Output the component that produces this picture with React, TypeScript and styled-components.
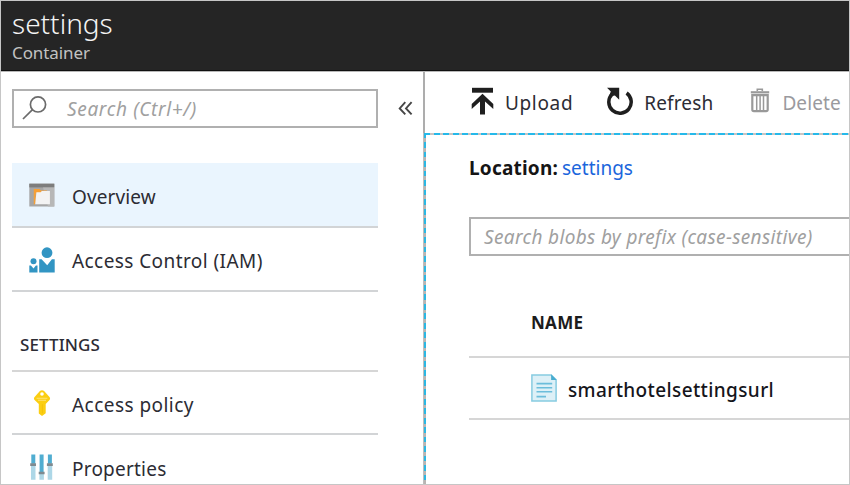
import React from "react";
import styled, { createGlobalStyle } from "styled-components";

const GlobalStyle = createGlobalStyle`
  *, *::before, *::after { box-sizing: border-box; }
  body { margin: 0; background: #fff; }
`;

const Frame = styled.div`
  width: 850px;
  height: 485px;
  border: 1px solid #c6c6c6;
  background: #fff;
  overflow: hidden;
  display: flex;
  flex-direction: column;
  font-family: "Noto Sans", "Open Sans", sans-serif;
  color: #262626;
  white-space: nowrap;
`;

const Header = styled.header`
  flex: none;
  height: 70px;
  background: #252525;
  border-bottom: 1px solid #101010;
  padding: 4px 0 0 11px;
  display: flex;
  flex-direction: column;
`;

const Text = styled.span<{
  $size: number;
  $spacing?: number;
  $color?: string;
  $weight?: number;
  $italic?: boolean;
}>`
  font-size: ${(p) => p.$size}px;
  letter-spacing: ${(p) => p.$spacing ?? 0}px;
  color: ${(p) => p.$color ?? "#2c2c34"};
  font-weight: ${(p) => p.$weight ?? 400};
  font-style: ${(p) => (p.$italic ? "italic" : "normal")};
`;

const Title = styled(Text).attrs({ as: "h1" })`
  margin: 0;
  line-height: 36px;
`;

const Subtitle = styled(Text)`
  line-height: 24px;
`;

const Body = styled.div`
  flex: 1;
  min-height: 0;
  display: flex;
  border-top: 1px solid #b8b8b8;
`;

const Sidebar = styled.aside`
  flex: none;
  width: 422px;
  padding: 17px 0 0 11px;
`;

const SearchLine = styled.div`
  display: flex;
  align-items: center;
  gap: 20px;
  margin-bottom: 35px;
`;

const Field = styled.div<{ $pad: number }>`
  height: 39px;
  border: 2px solid #b0b0b0;
  display: flex;
  align-items: center;
  padding-left: ${(p) => p.$pad}px;
`;

const MenuField = styled(Field)`
  width: 366px;
  gap: 19px;
  svg { margin-top: -2px; }
`;

const Menu = styled.nav`
  width: 366px;
`;

const MenuItem = styled.div<{ $height: number; $active?: boolean }>`
  height: ${(p) => p.$height}px;
  border-bottom: 2px solid #d2d4d6;
  background: ${(p) => (p.$active ? "#eaf5fe" : "transparent")};
  display: grid;
  grid-template-columns: 60px 1fr;
  align-items: center;
  padding-top: 4px;
`;

const IconCell = styled.span`
  display: flex;
  justify-content: center;
  padding-bottom: 3px;
  svg { display: block; }
`;

const SectionTitle = styled.div`
  height: 80px;
  border-bottom: 2px solid #d6d6d6;
  padding: 38px 0 0 8px;
  line-height: 30px;
`;

const Main = styled.main`
  flex: 1;
  min-width: 0;
  display: flex;
  flex-direction: column;
`;

const Toolbar = styled.div`
  flex: none;
  height: 61px;
  border-left: 2px solid #adadad;
  display: flex;
  align-items: center;
  padding-left: 46px;
`;

const ToolButton = styled.div<{ $gap: number; $after: number }>`
  display: flex;
  align-items: center;
  gap: ${(p) => p.$gap}px;
  margin-right: ${(p) => p.$after}px;
  svg { display: block; flex: none; margin-bottom: 4px; }
`;

const Blade = styled.section`
  flex: 1;
  min-height: 0;
  padding: 2px 0 0 46px;
  background:
    repeating-linear-gradient(90deg, #25b9ea 0 6px, #c9c4c2 6px 9.5px) 1px 0 / 100% 2px no-repeat,
    repeating-linear-gradient(180deg, #2bb7e3 0 5.5px, #b9b4b2 5.5px 9.5px) 1px 0 / 2px 100% no-repeat,
    linear-gradient(#bdbdbd, #bdbdbd) 0 0 / 1px 100% no-repeat;
`;

const Location = styled.div`
  height: 82px;
  padding-top: 19px;
  display: flex;
  gap: 4px;
  line-height: 28px;
`;

const BlobField = styled(Field)`
  border-right: 0;
`;

const TableHead = styled.div`
  height: 102px;
  border-bottom: 2px solid #d6d6d6;
  padding: 53px 0 0 62px;
  line-height: 28px;
`;

const TableRow = styled.div`
  height: 62px;
  border-bottom: 2px solid #d6d6d6;
  display: flex;
  align-items: center;
  padding: 3px 0 0 62px;
  gap: 11px;
  svg { display: block; margin-bottom: 4px; }
`;

const SearchIcon = () => (
  <svg width="26" height="26" viewBox="0 0 26 26" fill="none" stroke="#6b6b6b" strokeWidth="1.7">
    <circle cx="16" cy="9.4" r="7.6" />
    <path d="M10.5 14.6 1 24" />
  </svg>
);

const CollapseIcon = () => (
  <svg width="15" height="15" viewBox="0 0 15 15" fill="none" stroke="#464646" strokeWidth="1.9">
    <path d="M7.3 1.2 1.7 7.4l5.6 6M13.6 1.2 8 7.4l5.6 6" />
  </svg>
);

const OverviewIcon = () => (
  <svg width="26" height="24" viewBox="0 0 26 24">
    <path fill="#a6a6a6" d="M.3.7h25v22.8h-25z" />
    <path fill="#7d7d7d" d="M.3.7h25v3.7h-25z" />
    <path fill="#b7b7b7" d="M14 4.4h11.3v19.1H19z" />
    <path fill="#f7a035" d="M4.8 6h5.8l1.3 1.5h6v3H6.7V20l-1.9 2z" />
    <path fill="#f3f3f3" d="M7.4 9.2h4.2l1.3-1.3h8v13.4H6.2z" />
  </svg>
);

const PeopleIcon = () => (
  <svg width="26" height="26" viewBox="0 0 26 26" fill="#3295c3">
    <circle cx="18" cy="5.7" r="5.4" />
    <path d="M10.2 12.3h2.4l5.6 6 4.7-6h2.8v13.2H10.2z" />
    <circle cx="4.5" cy="14.3" r="3" />
    <path d="M.3 18.5h1.6l2.6 3 2.4-3h1.6v7H.3z" />
  </svg>
);

const KeyIcon = () => (
  <svg width="18" height="26" viewBox="0 0 18 26">
    <path fill="#fbce12" d="M9 .2c.8 0 1.5.3 2.1.9l5.4 6c.8.9.8 2 0 2.9l-3.8 4.1v9.2L9 26l-3.2-2.6v-9.3L1.6 10c-.9-.9-.9-2 0-2.9l5.3-6C7.5.5 8.2.2 9 .2z" />
    <circle cx="9" cy="4" r="1.8" fill="#fff" />
    <path fill="#fff" fillOpacity=".45" d="M3.6 7.7h10.8v1H3.6zm1.400 2.100h8v1H5z" />
    <path fill="#e8b400" d="M8.9 14.2h1v9h-1z" opacity=".45" />
  </svg>
);

const SlidersIcon = () => (
  <svg width="24" height="26" viewBox="0 0 24 26">
    <path fill="#add7e7" d="M1 11h4.5v14.7H1zM9.4 19h4.5v6.7H9.4zM17.7 11h4.5v14.7h-4.5z" />
    <path fill="#50add1" d="M1.3.5h4v9.2h-4zM9.6.5h4v17.5h-4zM17.9.5h4v9.2h-4z" />
    <path fill="#7f8a90" d="M.2 9.3H6v2.6H.2zM8.7 17.7h5.9v2.6H8.7zM16.9 9.3h5.9v2.6h-5.9z" />
  </svg>
);

const UploadIcon = () => (
  <svg width="23" height="28" viewBox="0 0 23 28" fill="#1f1f1f">
    <path d="M1 .8h21v4.900H1z" />
    <path d="M11.5 6.800 22.300 17v5L14 14.400v13.100H9V14.400L.7 22v-5z" />
  </svg>
);

const RefreshIcon = () => (
  <svg width="28" height="28" viewBox="0 0 28 28">
    <path d="M20.6 6A11.200 11.200 0 1 1 6 7.200" fill="none" stroke="#1f1f1f" strokeWidth="3.500" />
    <path d="M1 .8h12.200v12L8.900 8.600 5.300 9.200 3.300 8.600 4.800 4.400z" fill="#1f1f1f" />
  </svg>
);

const TrashIcon = () => (
  <svg width="20" height="25" viewBox="0 0 20 25" fill="none" stroke="#999">
    <path d="M.8 4.3h18.4" strokeWidth="2.2" />
    <path d="M7.3 2.9V1.3h5v1.6" strokeWidth="1.6" />
    <path d="M2.3 7.2h15.4v14.4q0 1.6-1.6 1.6H3.9q-1.6 0-1.6-1.6z" strokeWidth="2.2" />
    <path d="M6.7 8v14M10.1 8v14M13.5 8v14" strokeWidth="1.5" />
  </svg>
);

const FileIcon = () => (
  <svg width="26" height="28" viewBox="0 0 26 28">
    <path fill="#ddf0f7" stroke="#87cbe1" strokeWidth="1.5" d="M.9.9h19.2l5 5v21.2H.9z" />
    <path fill="#48acd0" d="M20.1.3 25.7 5.9h-5.6z" />
    <path stroke="#6cbddb" strokeWidth="1.6" d="M5.5 9.6h15.7M5.5 13.7h15.7M5.5 17.7h15.7M5.5 22.6h9.5" />
  </svg>
);

const App = () => (
  <>
    <GlobalStyle />
    <Frame>
      <Header>
        <Title $size={28} $color="#f4f4f4" $weight={300}>settings</Title>
        <Subtitle $size={17} $spacing={-0.1} $color="#c2c2c2">Container</Subtitle>
      </Header>
      <Body>
        <Sidebar>
          <SearchLine>
            <MenuField $pad={8}>
              <SearchIcon />
              <Text $size={19} $spacing={0.65} $color="#a0a0a0" $italic>Search (Ctrl+/)</Text>
            </MenuField>
            <CollapseIcon />
          </SearchLine>
          <Menu>
            <MenuItem $height={65} $active>
              <IconCell><OverviewIcon /></IconCell>
              <Text $size={19} $spacing={0.1}>Overview</Text>
            </MenuItem>
            <MenuItem $height={64}>
              <IconCell><PeopleIcon /></IconCell>
              <Text $size={19} $spacing={0.42}>Access Control (IAM)</Text>
            </MenuItem>
            <SectionTitle><Text $size={17} $spacing={0.1} $weight={500}>SETTINGS</Text></SectionTitle>
            <MenuItem $height={63}>
              <IconCell><KeyIcon /></IconCell>
              <Text $size={19} $spacing={0.45}>Access policy</Text>
            </MenuItem>
            <MenuItem $height={65}>
              <IconCell><SlidersIcon /></IconCell>
              <Text $size={19} $spacing={0.22}>Properties</Text>
            </MenuItem>
          </Menu>
        </Sidebar>
        <Main>
          <Toolbar>
            <ToolButton $gap={11} $after={33}>
              <UploadIcon />
              <Text $size={19} $spacing={0.65}>Upload</Text>
            </ToolButton>
            <ToolButton $gap={10} $after={37}>
              <RefreshIcon />
              <Text $size={19} $spacing={0.15}>Refresh</Text>
            </ToolButton>
            <ToolButton $gap={12} $after={0}>
              <TrashIcon />
              <Text $size={19} $spacing={0.1} $color="#9a9a9e">Delete</Text>
            </ToolButton>
          </Toolbar>
          <Blade>
            <Location>
              <Text $size={19} $spacing={0.2} $color="#151515" $weight={700}>Location:</Text>
              <Text $size={19} $color="#1b66dc">settings</Text>
            </Location>
            <BlobField $pad={13}>
              <Text $size={19} $spacing={0.35} $color="#a0a0a0" $italic>Search blobs by prefix (case-sensitive)</Text>
            </BlobField>
            <TableHead><Text $size={17} $spacing={0.3} $color="#1c1c1c" $weight={700}>NAME</Text></TableHead>
            <TableRow>
              <FileIcon />
              <Text $size={19} $spacing={0.38} $color="#15151b" $weight={500}>smarthotelsettingsurl</Text>
            </TableRow>
          </Blade>
        </Main>
      </Body>
    </Frame>
  </>
);

export default App;
